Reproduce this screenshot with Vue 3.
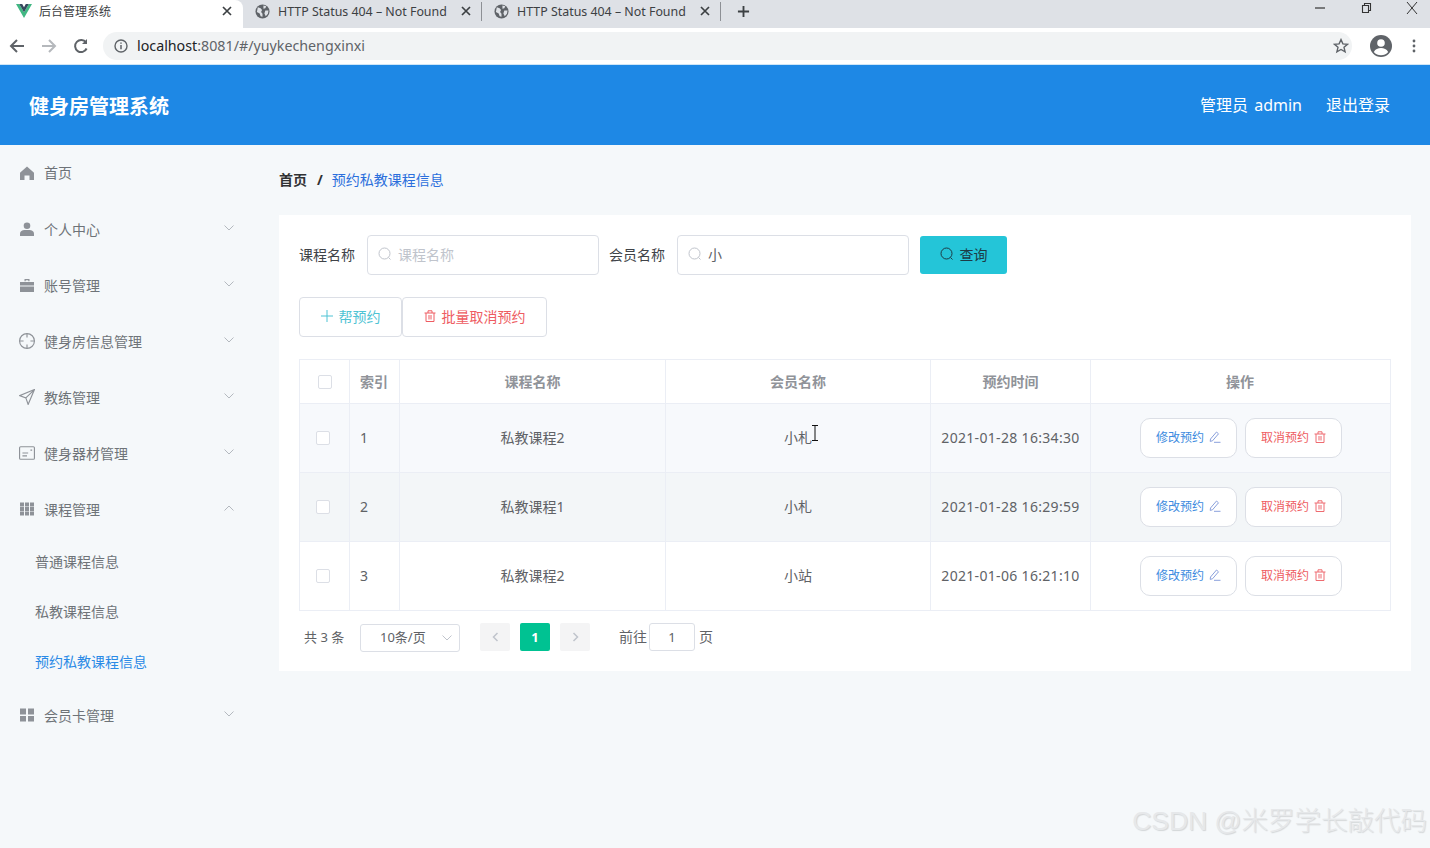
<template>
  <div class="page">
    <!-- browser tabs -->
    <div class="tabbar">
      <div class="tab active">
        <svg class="favicon" viewBox="0 0 16 14"><path d="M0 0h3.200L8 8.200 12.800 0H16L8 14z" fill="#41b883"/><path d="M3.200 0h3L8 3.200 9.800 0h3L8 8.200z" fill="#35495e"/></svg>
        <span class="tab-title cjk">后台管理系统</span>
        <svg class="tab-x" viewBox="0 0 10 10"><path d="M1 1l8 8M9 1L1 9" stroke="#3c4043" stroke-width="1.700"/></svg>
      </div>
      <div v-for="n in 2" :key="n" class="tab">
        <svg class="globe" viewBox="0 0 16 16"><circle cx="8" cy="8" r="7.500" fill="#5f6368"/><path d="M3 3.500l3 1 1.500 2-1 2 1.500 2v3l-2-.5-1-3-3-1.500zM9 1.500l3 1-1 2-2 .5zM11 7h3.400l-.6 3.500L11.500 13 10 10z" fill="#dee1e6"/></svg>
        <span class="tab-title">HTTP Status 404 – Not Found</span>
        <svg class="tab-x" viewBox="0 0 10 10"><path d="M1 1l8 8M9 1L1 9" stroke="#3c4043" stroke-width="1.700"/></svg>
        <i class="tab-sep"></i>
      </div>
      <svg class="newtab" viewBox="0 0 14 14"><path d="M7 1v12M1 7h12" stroke="#3c4043" stroke-width="2"/></svg>
      <div class="winctl">
        <svg viewBox="0 0 12 12"><path d="M1 6h10" stroke="#333" stroke-width="1.200"/></svg>
        <svg viewBox="0 0 12 12" fill="none" stroke="#333" stroke-width="1.100"><path d="M2.500 3.500h6v7h-6zM4.500 3.500v-2h6v7h-2"/></svg>
        <svg viewBox="0 0 12 12"><path d="M1 0l10 12M11 0L1 12" stroke="#333" stroke-width="1"/></svg>
      </div>
    </div>

    <!-- browser toolbar -->
    <div class="toolbar">
      <svg class="nav" viewBox="0 0 16 16" fill="none" stroke="#5f6368" stroke-width="2"><path d="M15 8H2M8 2L2 8l6 6"/></svg>
      <svg class="nav" viewBox="0 0 16 16" fill="none" stroke="#b5b8bc" stroke-width="2"><path d="M1 8h13M8 2l6 6-6 6"/></svg>
      <svg class="nav" viewBox="0 0 16 16" fill="none" stroke="#5f6368" stroke-width="2"><path d="M13.600 10.500A6 6 0 1 1 13 4.600"/><path d="M14 1v5h-5" fill="#5f6368" stroke="none"/></svg>
      <div class="omnibox">
        <svg class="info" viewBox="0 0 14 14"><circle cx="7" cy="7" r="6" fill="none" stroke="#5f6368" stroke-width="1.400"/><path d="M7 6v4.200M7 3.400v1.400" stroke="#5f6368" stroke-width="1.500"/></svg>
        <span class="url">localhost<em>:8081/#/yuykechengxinxi</em></span>
        <svg class="star" viewBox="0 0 16 16"><path d="M8 1.600l1.900 4.300 4.600.4-3.500 3 1.100 4.600L8 11.500l-4.100 2.400L5 9.300l-3.500-3 4.600-.4z" fill="none" stroke="#5f6368" stroke-width="1.400"/></svg>
      </div>
      <svg class="avatar" viewBox="0 0 24 24"><circle cx="12" cy="12" r="11" fill="#5f6368"/><circle cx="12" cy="9" r="3.800" fill="#fff"/><path d="M4.800 18c1.600-3 4.200-4 7.200-4s5.600 1 7.200 4a9.500 9.500 0 0 1-14.400 0z" fill="#fff"/></svg>
      <svg class="dots" viewBox="0 0 4 14"><circle cx="2" cy="2" r="1.400" fill="#5f6368"/><circle cx="2" cy="7" r="1.400" fill="#5f6368"/><circle cx="2" cy="12" r="1.400" fill="#5f6368"/></svg>
    </div>

    <header class="topbar">
      <div class="brand">健身房管理系统</div>
      <div class="user">
        <span>管理员 admin</span>
        <span>退出登录</span>
      </div>
    </header>

    <div class="body">
      <aside class="side">
        <template v-for="m in menu" :key="m.name">
          <div class="menu-item" :class="{ top: !m.arrow }">
            <svg class="menu-ico" :class="{ big: m.big }" viewBox="0 0 14 14" v-html="m.icon"></svg>
            <span class="menu-name">{{ m.name }}</span>
            <svg v-if="m.arrow" class="chev" viewBox="0 0 10 6" fill="none" stroke="#b4b9bf" stroke-width="1">
              <path :d="m.open ? 'M0.500 5.500L5 1l4.500 4.500' : 'M0.500 0.500L5 5l4.500-4.500'"/>
            </svg>
          </div>
          <template v-if="m.open">
            <div v-for="s in subs" :key="s" class="sub-item" :class="{ on: s === '预约私教课程信息' }">{{ s }}</div>
          </template>
        </template>
      </aside>

      <main class="main">
        <div class="crumb">
          <b>首页</b><i>/</i><span>预约私教课程信息</span>
        </div>

        <section class="card">
          <div class="search">
            <label>课程名称</label>
            <div class="input">
              <svg class="ico-search" viewBox="0 0 14 14" fill="none" stroke="#c0c4cc" stroke-width="1"><circle cx="6.500" cy="6.500" r="5.500"/><path d="M10.500 10.500l2 2"/></svg>
              <span class="ph">课程名称</span>
            </div>
            <label class="second">会员名称</label>
            <div class="input">
              <svg class="ico-search" viewBox="0 0 14 14" fill="none" stroke="#c0c4cc" stroke-width="1"><circle cx="6.500" cy="6.500" r="5.500"/><path d="M10.500 10.500l2 2"/></svg>
              <span>小</span>
            </div>
            <button class="btn-query">
              <svg class="ico-search" viewBox="0 0 14 14" fill="none" stroke="#1d3b45" stroke-width="1"><circle cx="6.500" cy="6.500" r="5.500"/><path d="M10.500 10.500l2 2"/></svg>
              查询
            </button>
          </div>

          <div class="actions">
            <button class="btn-act add">
              <svg viewBox="0 0 12 12" stroke="#4fc3d4" stroke-width="1"><path d="M6 0v12M0 6h12"/></svg>
              帮预约
            </button>
            <button class="btn-act del">
              <svg viewBox="0 0 12 12" fill="none" stroke="#ee5c62" stroke-width="1"><path d="M2 3v8.500h8V3M0.500 3h11M4 3V0.800h4V3M5 5v4.500M7 5v4.500"/></svg>
              批量取消预约
            </button>
          </div>

          <div class="table">
            <div class="tr head">
              <div class="td c-check"><i class="box"></i></div>
              <div class="td c-idx">索引</div>
              <div class="td c-a">课程名称</div>
              <div class="td c-b">会员名称</div>
              <div class="td c-c">预约时间</div>
              <div class="td c-d">操作</div>
            </div>
            <div v-for="(r, i) in rows" :key="i" class="tr row" :class="'row' + i">
              <div class="td c-check"><i class="box"></i></div>
              <div class="td c-idx">{{ i + 1 }}</div>
              <div class="td c-a">{{ r.course }}</div>
              <div class="td c-b">{{ r.member }}</div>
              <div class="td c-c date">{{ r.time }}</div>
              <div class="td c-d">
                <button class="btn-row edit">修改预约
                  <svg viewBox="0 0 12 12" fill="none" stroke="#8aa0dc" stroke-width="1"><path d="M1.500 8L7.500 1l2 1.800-6 7-2.300.6zM5 11.300h6.500"/></svg>
                </button>
                <button class="btn-row cancel">取消预约
                  <svg viewBox="0 0 12 12" fill="none" stroke="#ee6b70" stroke-width="1"><path d="M2 3v8.500h8V3M0.500 3h11M4 3V0.800h4V3M5 5v4.500M7 5v4.500"/></svg>
                </button>
              </div>
            </div>
          </div>

          <div class="pager">
            <span class="total">共 3 条</span>
            <div class="size">10条/页
              <svg viewBox="0 0 10 6" fill="none" stroke="#c0c4cc" stroke-width="1"><path d="M0.500 0.500L5 5l4.500-4.500"/></svg>
            </div>
            <div class="pg"><svg viewBox="0 0 6 10" fill="none" stroke="#c0c4cc" stroke-width="1.500"><path d="M5 1L1 5l4 4"/></svg></div>
            <div class="pg current">1</div>
            <div class="pg"><svg viewBox="0 0 6 10" fill="none" stroke="#c0c4cc" stroke-width="1.500"><path d="M1 1l4 4-4 4"/></svg></div>
            <span class="goto">前往</span>
            <div class="jump">1</div>
            <span class="goto-end">页</span>
          </div>
        </section>
      </main>
    </div>

    <!-- mouse cursor from the capture -->
    <svg class="ibeam" viewBox="0 0 8 16" fill="none" stroke="#111" stroke-width="1"><path d="M1 .5h6M4 .5v15M1 15.500h6"/></svg>
    <div class="watermark">CSDN @米罗学长敲代码</div>
  </div>
</template>

<script setup>
const home = '<path d="M7 .6L14 6.800V14H9.500V9.500h-5V14H0V6.800z" fill="#8e9298"/>'
const user = '<circle cx="7" cy="3.800" r="3.300" fill="#8e9298"/><path d="M0 14v-2.500C0 9.300 2.200 8 4.500 8h5c2.300 0 4.500 1.300 4.500 3.500V14z" fill="#8e9298"/>'
const bag = '<path d="M0 4h14v3.600H0zM0 8.600h14V14H0zM4.500 3.200V1h5v2.200H8.300V2.200H5.700v1z" fill="#8e9298"/>'
const aim = '<g fill="none" stroke="#8e9298" stroke-width="1"><circle cx="7" cy="7" r="6.500"/><path d="M7 .5v3.500M7 10v3.500M.5 7H4M10 7h3.500"/></g>'
const plane = '<path d="M13.500 .5L.5 5.800l5.500 2 2 5.700zM6 7.800L13.500 .5" fill="none" stroke="#8e9298" stroke-width="1"/>'
const card = '<g fill="none" stroke="#8e9298" stroke-width="1"><rect x=".5" y="1.500" width="13" height="11" rx="1"/><path d="M3 7h5M3 9.500h4M10 4.500h1.500"/></g>'
const grid = '<path d="M0 .5h4v4H0zM5 .5h4v4H5zM10 .5h4v4h-4zM0 5h4v4H0zM5 5h4v4H5zM10 5h4v4h-4zM0 9.500h4v4H0zM5 9.500h4v4H5zM10 9.500h4v4h-4z" fill="#8e9298"/>'
const four = '<path d="M0 .5h6v6H0zM8 .5h6v6H8zM0 8h6v5.500H0zM8 8h6v5.500H8z" fill="#8e9298"/>'

const menu = [
  { name: '首页', icon: home },
  { name: '个人中心', icon: user, arrow: true },
  { name: '账号管理', icon: bag, arrow: true },
  { name: '健身房信息管理', icon: aim, arrow: true, big: true },
  { name: '教练管理', icon: plane, arrow: true, big: true },
  { name: '健身器材管理', icon: card, arrow: true, big: true },
  { name: '课程管理', icon: grid, arrow: true, open: true },
  { name: '会员卡管理', icon: four, arrow: true },
]

const subs = ['普通课程信息', '私教课程信息', '预约私教课程信息']

const rows = [
  { course: '私教课程2', member: '小札', time: '2021-01-28 16:34:30' },
  { course: '私教课程1', member: '小札', time: '2021-01-28 16:29:59' },
  { course: '私教课程2', member: '小站', time: '2021-01-06 16:21:10' },
]
</script>

<style>
html, body {
  margin: 0;
  background: #f5f8fa;
}
</style>

<style scoped>
.page {
  position: relative;
  width: 1430px;
  height: 848px;
  overflow: hidden;
  background: #f5f8fa;
  font-family: "Noto Sans", "Noto Sans CJK SC", sans-serif;
  font-size: 14px;
  color: #606266;
}

/* browser chrome */
.tabbar {
  display: flex;
  align-items: center;
  height: 28px;
  background: #dee1e6;
}
.tab {
  position: relative;
  display: flex;
  align-items: center;
  width: 239px;
  height: 28px;
  padding: 0 0 6px 12px;
  box-sizing: border-box;
  color: #3c4043;
}
.tab.active {
  width: 243px;
  padding-left: 16px;
  background: #fff;
  border-radius: 0 8px 0 0;
}
.favicon {
  width: 16px;
  height: 14px;
  margin-right: 7px;
}
.globe {
  width: 15px;
  height: 15px;
  margin: 0 8px 0 0;
}
.tab-title {
  flex: 1;
  font-size: 12.400px;
  white-space: nowrap;
}
.tab-title.cjk {
  font-size: 12px;
}
.tab-x {
  flex: none;
  width: 10px;
  height: 10px;
  margin-right: 11px;
}
.tab-sep {
  position: absolute;
  right: 0;
  top: 2px;
  bottom: 7px;
  width: 1px;
  background: #8d9095;
}
.newtab {
  width: 13px;
  height: 13px;
  margin: 0 0 6px 16px;
}
.winctl {
  display: flex;
  gap: 34px;
  margin-left: auto;
  padding: 0 12px 12px 0;
}
.winctl svg {
  width: 12px;
  height: 12px;
}
.toolbar {
  display: flex;
  align-items: center;
  height: 36px;
  padding-left: 9px;
  background: #fff;
  border-bottom: 1px solid #cfe6f7;
}
.nav {
  width: 16px;
  height: 16px;
  margin-right: 16px;
}
.omnibox {
  display: flex;
  align-items: center;
  width: 1249px;
  height: 28px;
  margin-left: -2px;
  padding: 0 3px 0 11px;
  box-sizing: border-box;
  background: #f1f3f4;
  border-radius: 14px;
}
.info {
  width: 14px;
  height: 14px;
  margin-right: 9px;
}
.url {
  flex: 1;
  padding-bottom: 2px;
  font-size: 14.250px;
  color: #202124;
}
.url em {
  font-style: normal;
  color: #5f6368;
}
.star {
  width: 16px;
  height: 16px;
  margin-right: 0;
}
.avatar {
  width: 24px;
  height: 24px;
  margin-left: 17px;
}
.dots {
  width: 4px;
  height: 14px;
  margin-left: 19px;
}

/* app header */
.topbar {
  display: flex;
  align-items: center;
  justify-content: space-between;
  height: 80px;
  padding: 0 40px 0 29px;
  background: #1e88e5;
  color: #fff;
}
.brand {
  font-size: 20px;
  font-weight: 700;
}
.user {
  display: flex;
  gap: 24px;
  padding-bottom: 2px;
  font-size: 16px;
  word-spacing: 2px;
}

.body {
  display: flex;
}
.side {
  flex: none;
  width: 255px;
}
.menu-item {
  display: flex;
  align-items: center;
  height: 56px;
  padding: 0 21px 0 20px;
}
.menu-item.top .menu-name {
  padding-bottom: 2px;
}
.menu-ico {
  width: 14px;
  height: 14px;
  margin-right: 10px;
}
.menu-ico.big {
  width: 16px;
  height: 16px;
  margin: 0 9px 0 -1px;
}
.menu-name {
  flex: 1;
  color: #6e7378;
}
.chev {
  width: 10px;
  height: 6px;
  margin-bottom: 3px;
}
.sub-item {
  display: flex;
  align-items: center;
  height: 50px;
  padding: 0 0 2px 35px;
  box-sizing: border-box;
  color: #6e7378;
}
.sub-item.on {
  color: #2a8ae6;
}

.main {
  flex: 1;
  padding: 15px 19px 0 24px;
}
.crumb {
  display: flex;
  align-items: center;
  height: 40px;
  margin-bottom: 15px;
  padding-bottom: 2px;
  box-sizing: border-box;
  color: #303133;
}
.crumb b {
  font-weight: 600;
}
.crumb i {
  margin: 0 9px 0 10px;
  font-style: normal;
  font-weight: 700;
}
.crumb span {
  color: #2b6fdc;
}

.card {
  height: 456px;
  padding: 20px;
  box-sizing: border-box;
  background: #fff;
}
.search {
  display: flex;
  align-items: center;
  height: 40px;
}
.search label {
  width: 56px;
  margin-right: 12px;
  padding-bottom: 2px;
  color: #404348;
}
.search label.second {
  margin-left: 10px;
}
.input {
  display: flex;
  align-items: center;
  width: 232px;
  height: 40px;
  padding: 0 0 2px 10px;
  box-sizing: border-box;
  border: 1px solid #dcdfe6;
  border-radius: 4px;
  color: #606266;
}
.ico-search {
  width: 14px;
  height: 14px;
  margin-right: 6px;
}
.ph {
  color: #c0c4cc;
}
.btn-query {
  display: flex;
  align-items: center;
  justify-content: center;
  width: 87px;
  height: 38px;
  margin-left: 11px;
  padding: 0 0 2px;
  border: 0;
  border-radius: 3px;
  background: #24c5d8;
  color: #1d3b45;
  font: inherit;
}

.actions {
  display: flex;
  margin-top: 22px;
}
.btn-act {
  display: flex;
  align-items: center;
  justify-content: center;
  height: 40px;
  padding: 0 0 2px;
  background: #fff;
  border: 1px solid #dcdfe6;
  border-radius: 4px;
  font: inherit;
}
.btn-act svg {
  width: 12px;
  height: 12px;
  margin-right: 6px;
}
.btn-act.add {
  width: 103px;
  color: #4fc3d4;
}
.btn-act.del {
  width: 145px;
  color: #ee5c62;
}

.table {
  margin-top: 22px;
  border: 1px solid #ebeef5;
  border-bottom: 0;
  width: 1092px;
  box-sizing: border-box;
}
.tr {
  display: flex;
  border-bottom: 1px solid #ebeef5;
  box-sizing: border-box;
}
.head {
  height: 44px;
  font-weight: 700;
  color: #909399;
}
.row {
  height: 69px;
}
.row0 {
  background: #f7f9fc;
}
.row1 {
  background: #f3f6f8;
}
.td {
  display: flex;
  align-items: center;
  justify-content: center;
  padding-bottom: 2px;
  box-sizing: border-box;
  border-right: 1px solid #ebeef5;
}
.td:last-child {
  border-right: 0;
}
.c-check { width: 50px; padding: 0 4px 0 0; }
.head .c-check { padding-right: 0; }
.c-idx { width: 50px; justify-content: flex-start; padding-left: 10px; }
.c-a { width: 266px; }
.c-b { width: 265px; }
.c-c { width: 160px; }
.date { letter-spacing: .32px; }
.c-d { flex: 1; gap: 8px; padding: 0 0 0 1px; }
.head .c-d { padding: 0 1px 2px 0; }
.box {
  display: block;
  width: 14px;
  height: 14px;
  box-sizing: border-box;
  border: 1px solid #dcdfe6;
  border-radius: 2px;
  background: #fff;
}
.btn-row {
  display: flex;
  align-items: center;
  justify-content: center;
  gap: 5px;
  width: 97px;
  height: 40px;
  padding: 0 0 2px;
  background: #fff;
  border: 1px solid #dcdfe6;
  border-radius: 10px;
  font-family: inherit;
  font-size: 12px;
}
.btn-row svg {
  width: 12px;
  height: 12px;
}
.btn-row.edit { color: #3d8be0; }
.btn-row.cancel { color: #ee5c62; }

.pager {
  display: flex;
  align-items: center;
  height: 28px;
  margin-top: 13px;
  font-size: 13px;
}
.total {
  width: 56px;
  padding: 0 0 4px 5px;
}
.size {
  display: flex;
  align-items: center;
  justify-content: space-between;
  width: 100px;
  height: 28px;
  margin-right: 20px;
  padding: 0 7px 4px 19px;
  box-sizing: border-box;
  border: 1px solid #dcdfe6;
  border-radius: 3px;
}
.size svg {
  width: 10px;
  height: 6px;
  margin-top: 4px;
}
.pg {
  display: flex;
  align-items: center;
  justify-content: center;
  width: 30px;
  height: 28px;
  margin: 0 10px 2px 0;
  background: #f4f4f5;
  border-radius: 2px;
}
.pg svg {
  width: 7px;
  height: 10px;
}
.pg.current {
  background: #00c292;
  color: #fff;
  font-weight: 700;
}
.goto {
  margin-left: 19px;
  margin-right: 2px;
  padding-bottom: 4px;
  font-size: 14px;
}
.jump {
  width: 46px;
  height: 28px;
  margin-bottom: 2px;
  line-height: 26px;
  text-align: center;
  box-sizing: border-box;
  border: 1px solid #dcdfe6;
  border-radius: 3px;
}
.goto-end {
  margin-left: 4px;
  padding-bottom: 4px;
  font-size: 14px;
}

.ibeam {
  position: absolute;
  left: 811px;
  top: 425px;
  width: 8px;
  height: 16px;
}
.watermark {
  position: absolute;
  right: 3px;
  bottom: 9px;
  font-family: "Liberation Sans", "Noto Sans CJK SC", sans-serif;
  font-size: 26.500px;
  font-weight: 300;
  line-height: 36px;
  white-space: nowrap;
  color: #e6e8ea;
  text-shadow: 1px 1px 1px #d3d6d8;
}
</style>
